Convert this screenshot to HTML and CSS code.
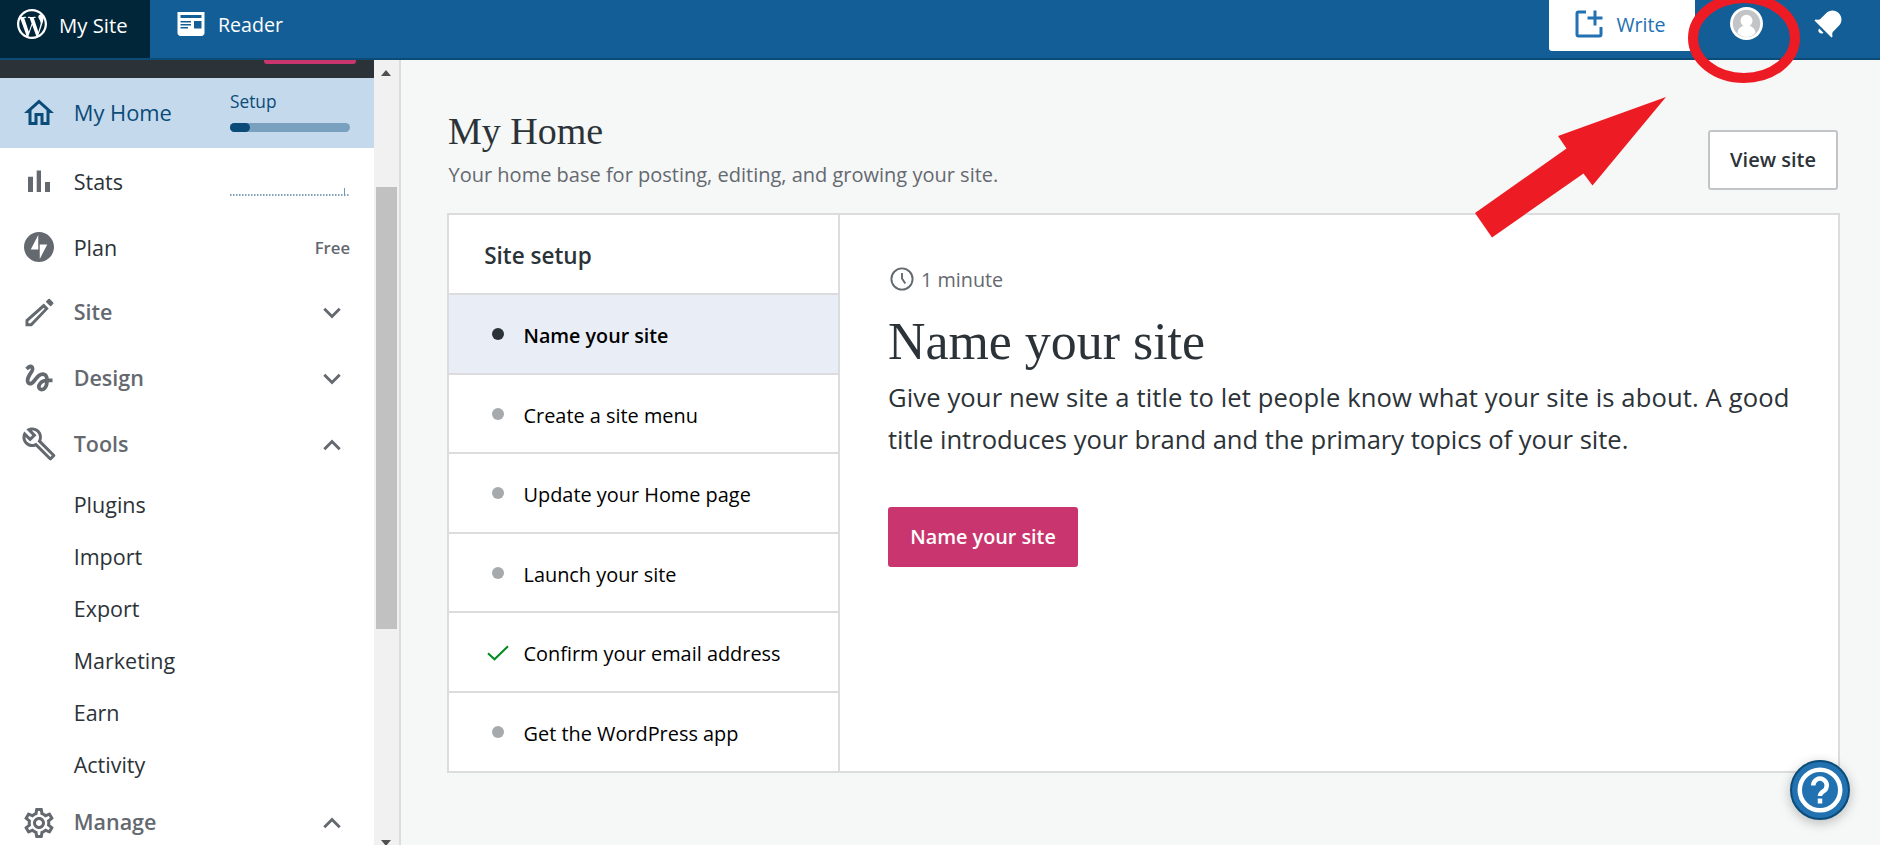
FILE: index.html
```html
<!DOCTYPE html>
<html lang="en">
<head>
<meta charset="utf-8">
<title>My Home</title>
<link rel="stylesheet" href="styles.css">
</head>
<body>
<header class="masterbar">
  <a class="mb-item mb-active"><svg class="icon" viewBox="0 0 24 24"><path d="M12 2C6.477 2 2 6.477 2 12s4.477 10 10 10 10-4.477 10-10S17.523 2 12 2zM3.5 12c0-1.232.264-2.402.736-3.459L8.291 19.65C5.456 18.272 3.5 15.365 3.5 12zm8.5 8.501c-.834 0-1.64-.122-2.401-.346l2.551-7.411 2.613 7.158a.718.718 0 0 0 .061.117 8.497 8.497 0 0 1-2.824.482zm1.172-12.486c.512-.027.973-.081.973-.081.458-.054.404-.727-.054-.701 0 0-1.377.108-2.266.108-.835 0-2.239-.108-2.239-.108-.458-.026-.511.674-.053.701 0 0 .434.054.892.081l1.324 3.629-1.86 5.579-3.096-9.208c.512-.027.973-.081.973-.081.458-.054.403-.727-.055-.701 0 0-1.376.108-2.265.108-.16 0-.347-.004-.547-.01A8.491 8.491 0 0 1 12 3.5c2.213 0 4.228.846 5.74 2.232-.037-.002-.072-.007-.11-.007-.835 0-1.427.727-1.427 1.509 0 .701.404 1.293.835 1.994.323.566.701 1.293.701 2.344 0 .727-.28 1.572-.647 2.748l-.848 2.833-3.072-9.138zm3.101 11.332l2.596-7.506c.485-1.213.646-2.182.646-3.045 0-.313-.021-.603-.057-.874A8.455 8.455 0 0 1 20.5 12a8.493 8.493 0 0 1-4.227 7.347z"/></svg><span>My Site</span></a>
  <a class="mb-item mb-reader"><svg class="icon" viewBox="0 0 24 24"><path d="M3 4v14c0 1.1.9 2 2 2h14c1.1 0 2-.9 2-2V4H3zm7 11H5v-1h5v1zm2-2H5v-1h7v1zm0-2H5v-1h7v1zm7 4h-5v-5h5v5zm0-7H5V6h14v2z"/></svg><span>Reader</span></a>
  <a class="write"><svg class="icon" viewBox="0 0 24 24"><path d="M21 14v5a2 2 0 0 1-2 2H5a2 2 0 0 1-2-2V5a2 2 0 0 1 2-2h5v2H5v14h14v-5h2z"/><path d="M21 7h-4V3h-2v4h-4v2h4v4h2V9h4z"/></svg><span>Write</span></a>
  <svg class="avatar" viewBox="0 0 33 33"><circle cx="16.500" cy="16.500" r="16.500" fill="#fff"/><circle cx="16.500" cy="16.500" r="13.700" fill="#c3c4c7"/><circle cx="16.500" cy="13.800" r="6" fill="#fff"/><path d="M7.500 26c.5-5 4-7.500 9-7.500s8.500 2.500 9 7.500c-2.500 2.700-5.500 4-9 4s-6.500-1.300-9-4z" fill="#fff"/></svg>
  <svg class="icon bell" viewBox="0 0 24 24"><path d="M6.140 14.970l2.828 2.827c-.362.362-.862.586-1.414.586-1.105 0-2-.895-2-2 0-.552.224-1.052.586-1.414zm8.867 5.324L14.300 21 3 9.700l.706-.707 1.102.157c.754.108 1.690-.122 2.077-.510l3.885-3.884c2.340-2.340 6.135-2.340 8.475 0s2.340 6.135 0 8.475l-3.885 3.886c-.388.388-.618 1.323-.510 2.077l.157 1.100z"/></svg>
</header>

<div class="layout">
  <aside class="sidebar">
    <nav class="menu">
      <div class="site-strip"><span class="strip-button"></span></div>
      <a class="item home"><svg class="icon" viewBox="0 0 24 24"><path d="M12 5.690l5 4.500V18h-2v-6H9v6H7v-7.810l5-4.500M12 3L2 12h3v8h6v-6h2v6h6v-8h3L12 3z"/></svg><span class="label">My Home</span><span class="setup"><span>Setup</span><span class="track"><span class="fill"></span></span></span></a>
      <a class="item stats"><svg class="icon" viewBox="0 0 36 36"><path d="M7 12.700h5V28H7zM15.700 6.500H20V28h-4.300zM24 18h5v10h-5z"/></svg><span class="label">Stats</span><span class="spark"><span class="peak"></span></span></a>
      <a class="item plan"><svg class="icon" viewBox="-3.200 -3.200 38.400 38.400"><path d="M16 0C7.200 0 0 7.200 0 16s7.200 16 16 16 16-7.200 16-16S24.800 0 16 0zm-.8 18.700h-8l8-15.500v15.500zm1.600 10.100V13.300h8l-8 15.500z"/></svg><span class="label">Plan</span><span class="free">Free</span></a>
      <a class="item group"><svg class="icon" viewBox="0 -1 36 36"><path fill-rule="evenodd" d="M22.800 8.600l4.900 4.900L10.900 31.200H4.500v-6.400L22.800 8.600zM22.700 12.800L7.400 26.200v2.100h2.200L23.700 13.800z"/><path d="M27.300 4.100q.8-.7 1.600 0l3.300 3.300q.7.800 0 1.600l-2.600 2.600-4.900-4.900z"/></svg><span class="label">Site</span><svg class="chev" viewBox="0 0 18 12"><path d="M1.300 1.800L9 9.500l7.700-7.700"/></svg></a>
      <a class="item group"><svg class="icon" viewBox="0 0 24 24"><path d="M4.590 6.890c.7-.71 1.400-1.350 1.710-1.220.5.2 0 1.030-.3 1.520-.25.42-2.860 3.890-2.860 6.310 0 1.280.48 2.340 1.340 2.980.75.56 1.740.73 2.640.46 1.070-.31 1.950-1.400 3.060-2.770 1.210-1.490 2.830-3.440 4.080-3.440 1.630 0 1.650 1.010 1.760 1.790-3.780.64-5.380 3.670-5.380 5.370 0 1.700 1.440 3.090 3.210 3.090 1.630 0 4.290-1.330 4.690-6.100H21v-2.500h-2.470c-.15-1.650-1.090-4.200-4.030-4.200-2.250 0-4.180 1.910-4.940 2.840-.58.73-2.060 2.480-2.290 2.720-.25.3-.68.84-1.110.84-.45 0-.72-.83-.36-1.920.35-1.090 1.400-2.860 1.850-3.520.78-1.140 1.300-1.920 1.300-3.280C8.950 3.690 7.310 3 6.440 3 5.120 3 3.970 4 3.720 4.250c-.36.36-.66.66-.88.93l1.750 1.710zm9.290 11.660c-.31 0-.74-.26-.74-.72 0-.6.73-2.200 2.870-2.760-.3 2.690-1.430 3.480-2.130 3.480z"/></svg><span class="label">Design</span><svg class="chev" viewBox="0 0 18 12"><path d="M1.300 1.800L9 9.500l7.700-7.700"/></svg></a>
      <a class="item group"><svg class="icon" viewBox="0 0 24 24"><path d="M22.610 18.990l-9.080-9.080c.93-2.340.45-5.100-1.440-7C9.790.61 6.210.4 3.660 2.260L7.500 6.110 6.080 7.520 2.250 3.690C.39 6.230.6 9.820 2.900 12.110c1.860 1.860 4.570 2.350 6.890 1.480l9.110 9.110c.39.39 1.020.39 1.410 0l2.300-2.300c.4-.38.4-1.010 0-1.410zm-3 1.600l-9.460-9.460c-.61.45-1.290.72-2 .82-1.360.2-2.790-.21-3.830-1.250C3.370 9.760 2.930 8.500 3 7.260l3.090 3.090 4.240-4.240-3.090-3.090c1.240-.07 2.490.37 3.440 1.310 1.080 1.080 1.490 2.570 1.240 3.960-.12.71-.42 1.370-.88 1.960l9.450 9.450-.88.89z"/></svg><span class="label">Tools</span><svg class="chev" viewBox="0 0 18 12"><path d="M1.300 10.200L9 2.500l7.700 7.700"/></svg></a>
      <div class="sub">
        <a>Plugins</a><a>Import</a><a>Export</a><a>Marketing</a><a>Earn</a><a>Activity</a>
      </div>
      <a class="item group manage"><svg class="icon" viewBox="0 0 24 24"><path d="M19.430 12.980c.04-.32.07-.64.07-.98 0-.34-.03-.66-.07-.98l2.110-1.650c.19-.15.24-.42.12-.64l-2-3.460c-.09-.16-.26-.25-.44-.25-.06 0-.12.010-.17.030l-2.490 1c-.52-.4-1.080-.73-1.690-.98l-.38-2.650C14.460 2.180 14.250 2 14 2h-4c-.25 0-.46.18-.49.42l-.38 2.650c-.61.25-1.170.59-1.690.98l-2.490-1c-.06-.02-.12-.03-.18-.03-.17 0-.34.09-.43.25l-2 3.460c-.13.22-.07.49.12.64l2.110 1.650c-.04.32-.07.65-.07.98 0 .33.03.66.07.98l-2.110 1.650c-.19.15-.24.42-.12.64l2 3.460c.09.16.26.25.44.25.06 0 .12-.010.17-.030l2.490-1c.52.4 1.080.73 1.690.98l.38 2.650c.03.24.24.42.49.42h4c.25 0 .46-.18.49-.42l.38-2.650c.61-.25 1.170-.59 1.690-.98l2.490 1c.06.02.12.03.18.03.17 0 .34-.09.43-.25l2-3.460c.12-.22.07-.49-.12-.64l-2.110-1.650zm-1.980-1.710c.04.31.05.52.05.73 0 .21-.02.43-.05.73l-.14 1.130.89.7 1.080.84-.7 1.210-1.270-.51-1.040-.42-.9.68c-.43.32-.84.56-1.250.73l-1.060.43-.16 1.130-.2 1.350h-1.400l-.19-1.350-.16-1.130-1.060-.43c-.43-.18-.83-.41-1.230-.71l-.91-.7-1.060.43-1.270.51-.7-1.210 1.080-.84.89-.7-.14-1.130c-.03-.31-.05-.54-.05-.74s.02-.43.05-.73l.14-1.130-.89-.7-1.080-.84.7-1.210 1.270.51 1.040.42.9-.68c.43-.32.84-.56 1.250-.73l1.060-.43.16-1.130.2-1.350h1.390l.19 1.350.16 1.130 1.060.43c.43.18.83.41 1.230.71l.91.7 1.060-.43 1.270-.51.7 1.210-1.070.85-.89.7.14 1.130zM12 8c-2.210 0-4 1.790-4 4s1.790 4 4 4 4-1.790 4-4-1.790-4-4-4zm0 6c-1.100 0-2-.9-2-2s.9-2 2-2 2 .9 2 2-.9 2-2 2z"/></svg><span class="label">Manage</span><svg class="chev" viewBox="0 0 18 12"><path d="M1.300 10.200L9 2.500l7.700 7.700"/></svg></a>
    </nav>
    <div class="scrollbar"><span class="arrow-up"></span><span class="thumb"></span><span class="arrow-down"></span></div>
  </aside>

  <main class="main">
    <div class="page-head">
      <div>
        <h1>My Home</h1>
        <p class="tagline">Your home base for posting, editing, and growing your site.</p>
      </div>
      <a class="view-site">View site</a>
    </div>
    <section class="card">
      <div class="tasks">
        <h2>Site setup</h2>
        <a class="task current"><i class="dot"></i>Name your site</a>
        <a class="task"><i class="dot"></i>Create a site menu</a>
        <a class="task"><i class="dot"></i>Update your Home page</a>
        <a class="task"><i class="dot"></i>Launch your site</a>
        <a class="task"><svg class="check" viewBox="0 0 22 16"><path d="M1 8.300l6.500 6L21 1.200"/></svg>Confirm your email address</a>
        <a class="task"><i class="dot"></i>Get the WordPress app</a>
      </div>
      <div class="detail">
        <div class="timing"><svg class="clock" viewBox="0 0 24 24"><circle cx="12" cy="12" r="10.600"/><path d="M12 6v5.500l3.300 5"/></svg>1 minute</div>
        <h3>Name your site</h3>
        <p>Give your new site a title to let people know what your site is about. A good<br><span class="tight">title introduces your brand and the primary topics of your site.</span></p>
        <a class="primary">Name your site</a>
      </div>
    </section>
  </main>
</div>

<div class="help"><svg viewBox="0 0 24 24"><circle cx="12" cy="12" r="9"/><path d="M9 10a3 3 0 1 1 4.600 2.500C12.500 13.200 12 13.600 12 14.700"/><path d="M12 15.800v2.200"/></svg></div>
<svg class="annotation" viewBox="0 0 1880 845"><ellipse cx="1744" cy="38" rx="51" ry="40"/><path d="M1666 97L1558 136l8.500 12.500L1475 213l17 24.500 91.500-64 9 12z"/></svg>
</body>
</html>
```
FILE: styles.css
```css
* { box-sizing: border-box; }
body {
  margin: 0;
  height: 845px;
  overflow: hidden;
  background: #f6f7f7;
  color: #2c3338;
  font-family: "Open Sans", "Noto Sans", sans-serif;
  font-size: 20px;
}
h1, h2, h3, p { margin: 0; }
svg { display: block; flex: none; }
.icon { width: 36px; height: 36px; fill: currentColor; }

.masterbar {
  display: flex;
  height: 60px;
  background: #135e96;
  border-bottom: 2px solid #0a4b78;
  color: #fff;
}
.mb-item { display: flex; align-items: center; gap: 9px; padding: 0 0 10px 23px; }
.mb-item span, .write span { padding-top: 1px; line-height: 28px; }
.mb-active { width: 150px; padding-left: 14px; background: #01263a; font-size: 20.300px; }
.mb-reader { font-size: 19.600px; }
.write {
  display: flex;
  align-items: center;
  gap: 10px;
  width: 146px;
  height: 51px;
  margin-left: auto;
  padding: 0 0 3px 22px;
  border-radius: 0 0 3px 3px;
  background: #fff;
  color: #2271b1;
  font-size: 19.600px;
}
.avatar { width: 33px; height: 33px; margin: 7px 0 0 35.500px; }
.bell { margin: 5.500px 34.500px 0 46.500px; }
.write { position: static; }

.layout { display: flex; height: 785px; }
.sidebar { display: flex; width: 401px; border-right: 2px solid #dcdcde; background: #fff; flex: none; }
.menu { width: 374px; }
.site-strip { display: flex; height: 18px; padding-left: 264px; background: #2c3338; }
.strip-button { width: 92px; height: 4px; border-radius: 0 0 3px 3px; background: #c9356e; }
.item {
  display: flex;
  align-items: center;
  height: 66px;
  padding: 0 24px 0 21px;
  color: #646970;
  font-size: 21.500px;
}
.label { margin: 0 auto 0 16.700px; line-height: 30px; color: #2c3338; }
.group .label { color: #646970; font-weight: 600; }
.home { height: 70px; background: #c5d9ed; color: #0a4b78; font-size: 21.900px; }
.home .label { color: #0a4b78; }
.setup { display: flex; flex-direction: column; gap: 9px; width: 120px; padding-bottom: 5px; font-size: 17.300px; line-height: 24px; }
.track { height: 9px; border-radius: 4.500px; background: #7aa0bf; }
.fill { display: block; width: 20px; height: 9px; border-radius: 4.500px; background: #0a4b78; }
.stats { height: 67px; }
.spark {
  display: flex;
  justify-content: flex-end;
  width: 120px;
  height: 8px;
  margin-top: 21px;
  padding-right: 5px;
  background: repeating-linear-gradient(90deg, #87a6bd 0 1px, #bccdda 1px 2px, #fff 2px 3px) bottom / 100% 2px no-repeat;
}
.peak { width: 1px; background: #7d97aa; }
.plan { height: 64px; }
.plan .label, .free { padding-top: 2px; }
.free { font-size: 16.700px; font-weight: 600; line-height: 24px; }
.chev { width: 18px; height: 12px; margin: 2px 9px 0 0; fill: none; stroke: #646970; stroke-width: 2.900; }
.sub { padding: 2px 0 0 73.700px; }
.sub a { display: block; height: 52px; line-height: 52px; font-size: 21.500px; }
.manage { height: 64px; }
.manage .label { margin-bottom: 2px; }
.manage .chev { margin-top: 0; }
.scrollbar { display: flex; flex-direction: column; width: 25px; padding: 10px 2px 0; background: #f1f1f1; }
.arrow-up, .arrow-down { width: 0; height: 0; margin: 0 auto 0 4.500px; border: solid transparent; border-width: 0 5.500px; }
.arrow-up { border-bottom: 6px solid #505050; }
.arrow-down { border-top: 6px solid #505050; margin-top: 211px; }
.thumb { flex: none; height: 442px; margin-top: 111px; background: #c1c1c1; }

.main { width: 1439px; padding: 48px 0 0 46px; }
.page-head { display: flex; justify-content: space-between; height: 105px; }
h1 { margin-left: 1px; font: 400 38px/46px "Liberation Serif", serif; }
.tagline { margin: 5px 0 0 1.500px; line-height: 32px; color: #646970; }
.view-site {
  width: 130px;
  height: 60px;
  margin: 22px 2px 0 0;
  border: 2px solid #c3c4c7;
  border-radius: 3px;
  background: #fff;
  font-weight: 600;
  line-height: 56px;
  text-align: center;
}
.card { display: flex; height: 560px; border: 2px solid #dcdcde; background: #fff; }
.tasks { display: grid; grid-template-rows: 80px 80px 79px 80px 79px 80px 78px; width: 391px; border-right: 2px solid #dcdcde; flex: none; }
.tasks h2 { padding: 2px 0 0 35.200px; border-bottom: 2px solid #dcdcde; font-size: 22.500px; font-weight: 600; line-height: 77px; }
.task { display: flex; align-items: center; padding: 4px 0 0 43px; border-bottom: 2px solid #dcdcde; color: #000; font-size: 19.900px; line-height: 30px; }
.task:last-child { border-bottom: 0; }
.current { padding-top: 3px; background: #e9eef6; font-size: 19.700px; font-weight: 600; }
.dot { width: 12px; height: 12px; margin: -4px 19.500px 0 0; border-radius: 50%; background: #a7aaad; }
.current .dot { margin-top: -3px; background: #2c3338; }
.check { width: 22px; height: 16px; margin: -3px 14.500px 0 -5px; fill: none; stroke: #008a20; stroke-width: 2; }
.detail { padding: 48px 0 0 48px; }
.timing { display: flex; align-items: center; gap: 7px; height: 32px; padding-left: 2px; color: #646970; font-size: 19.800px; }
.clock { width: 24px; height: 24px; fill: none; stroke: #646970; stroke-width: 1.900; }
h3 { margin: 16px 0 0; font: 400 51.900px/62px "Liberation Serif", serif; }
.detail p { margin-top: 4px; font-size: 25.600px; letter-spacing: .110px; line-height: 42px; white-space: nowrap; }
.tight { letter-spacing: -.030px; }
.primary {
  display: block;
  width: 190px;
  height: 60px;
  margin-top: 46px;
  border-radius: 3px;
  background: #c9356e;
  color: #fff;
  font-size: 19.800px;
  font-weight: 600;
  line-height: 60px;
  text-align: center;
}

.help {
  position: absolute;
  left: 1790px;
  top: 760px;
  width: 60px;
  height: 60px;
  padding: 1px;
  border: 2px solid #0a4b78;
  border-radius: 50%;
  background: #2271b1;
  box-shadow: 0 3px 12px rgba(0, 0, 0, .25);
}
.help svg { width: 54px; height: 54px; fill: none; stroke: #fff; stroke-width: 2; }
.annotation { position: absolute; left: 0; top: 0; width: 1880px; height: 845px; pointer-events: none; fill: #ed1c24; }
.annotation ellipse { fill: none; stroke: #ed1c24; stroke-width: 10; }
```
